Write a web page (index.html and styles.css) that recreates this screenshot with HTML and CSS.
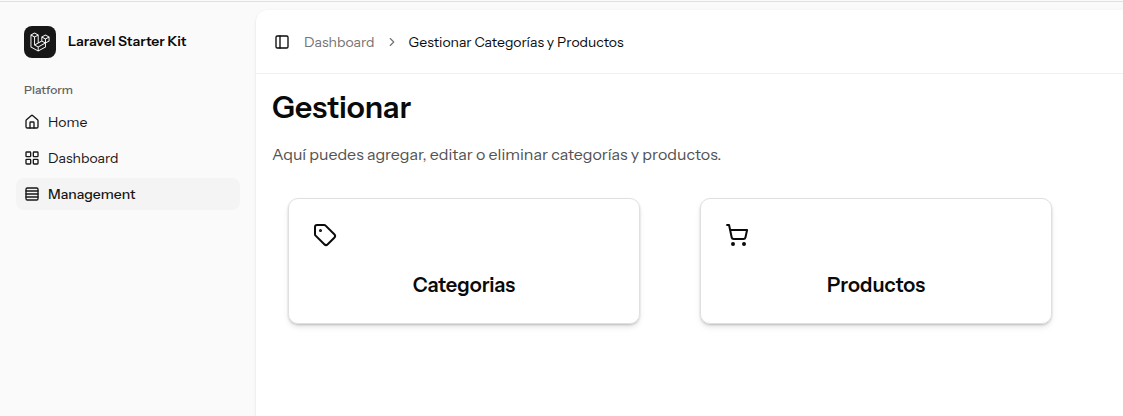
FILE: index.html
```html
<!DOCTYPE html>
<html lang="es">
<head>
<meta charset="utf-8">
<title>Gestionar Categorías y Productos</title>
<link rel="stylesheet" href="styles.css">
</head>
<body>
<div class="app">
  <aside class="sidebar">
    <div class="brand">
      <span class="brand-mark"><svg viewBox="0 0 40 42" width="20" height="20"><path fill="#fff" fill-rule="evenodd" clip-rule="evenodd" d="M17.2 5.633 8.6.855 0 5.633v26.51l16.2 9 16.2-9v-8.442l7.6-4.223V9.856l-8.6-4.777-8.6 4.777V18.3l-5.6 3.111V5.633ZM38 18.301l-5.6 3.11v-6.157l5.6-3.11V18.3Zm-1.06-7.856-5.54 3.078-5.54-3.079 5.54-3.078 5.54 3.079ZM24.8 18.3v-6.157l5.6 3.111v6.158L24.8 18.3Zm-1 1.732 5.54 3.078-13.14 7.302-5.54-3.078 13.14-7.3v-.002Zm-16.2 7.89 7.6 4.222V38.3L2 30.966V7.92l5.6 3.111v16.892ZM8.6 9.3 3.06 6.222 8.6 3.143l5.54 3.08L8.6 9.3Zm21.8 15.51-13.2 7.334V38.3l13.2-7.334v-6.156ZM9.6 11.034l5.6-3.11v14.6l-5.6 3.11v-14.6Z"/></svg></span>
      <span class="brand-name">Laravel Starter Kit</span>
    </div>
    <div class="group-label">Platform</div>
    <nav class="menu">
      <a class="item"><svg class="icon" viewBox="0 0 24 24"><path d="M15 21v-8a1 1 0 0 0-1-1h-4a1 1 0 0 0-1 1v8"/><path d="M3 10a2 2 0 0 1 .709-1.528l7-5.999a2 2 0 0 1 2.582 0l7 5.999A2 2 0 0 1 21 10v9a2 2 0 0 1-2 2H5a2 2 0 0 1-2-2z"/></svg><span>Home</span></a>
      <a class="item"><svg class="icon" viewBox="0 0 24 24"><rect width="7" height="7" x="3" y="3" rx="1"/><rect width="7" height="7" x="14" y="3" rx="1"/><rect width="7" height="7" x="14" y="14" rx="1"/><rect width="7" height="7" x="3" y="14" rx="1"/></svg><span>Dashboard</span></a>
      <a class="item active"><svg class="icon" viewBox="0 0 24 24"><rect width="18" height="18" x="3" y="3" rx="2"/><path d="M21 7.500H3M21 12H3M21 16.500H3"/></svg><span>Management</span></a>
    </nav>
  </aside>
  <main class="panel">
    <header class="topbar">
      <svg class="icon" viewBox="0 0 24 24"><rect width="18" height="18" x="3" y="3" rx="2"/><path d="M9 3v18"/></svg>
      <span class="crumb">Dashboard</span>
      <svg class="chevron" viewBox="0 0 24 24"><path d="m9 18 6-6-6-6"/></svg>
      <span class="crumb-current">Gestionar Categorías y Productos</span>
    </header>
    <section class="content">
      <h1>Gestionar</h1>
      <p>Aquí puedes agregar, editar o eliminar categorías y productos.</p>
      <div class="cards">
        <article class="card">
          <svg class="card-icon" viewBox="0 0 24 24"><path d="M12.586 2.586A2 2 0 0 0 11.172 2H4a2 2 0 0 0-2 2v7.172a2 2 0 0 0 .586 1.414l8.704 8.704a2.426 2.426 0 0 0 3.420 0l6.580-6.580a2.426 2.426 0 0 0 0-3.420z"/><circle cx="7.500" cy="7.500" r=".5" fill="currentColor"/></svg>
          <h2>Categorias</h2>
        </article>
        <article class="card">
          <svg class="card-icon" viewBox="0 0 24 24"><circle cx="8" cy="21" r="1"/><circle cx="19" cy="21" r="1"/><path d="M2.050 2.050h2l2.660 12.420a2 2 0 0 0 2 1.580h9.780a2 2 0 0 0 1.950-1.570l1.650-7.430H5.120"/></svg>
          <h2>Productos</h2>
        </article>
      </div>
    </section>
  </main>
</div>
</body>
</html>
```
FILE: styles.css
```css
* { box-sizing: border-box; }
body {
  margin: 0;
  height: 416px;
  overflow: hidden;
  background: #fafafa;
  color: #0a0a0a;
  font-family: "Instrument Sans", Inter, "Liberation Sans", sans-serif;
  font-size: 14px;
  line-height: 20px;
  white-space: nowrap;
}
.app { display: flex; height: 416px; padding-top: 1px; }
.app::before {
  content: "";
  position: absolute;
  inset: 1px 0 auto;
  height: 1px;
  background: #dfe0e6;
}
svg { display: block; flex: none; }
.icon, .chevron, .card-icon {
  fill: none;
  stroke: currentColor;
  stroke-width: 2;
  stroke-linecap: round;
  stroke-linejoin: round;
}
.icon { width: 16px; height: 16px; }
.sidebar { width: 256px; flex: none; padding: 17px 16px 0; }
.brand { display: flex; align-items: center; gap: 12px; height: 48px; padding: 0 8px; }
.brand-mark {
  display: flex;
  align-items: center;
  justify-content: center;
  width: 32px;
  height: 32px;
  border-radius: 8px;
  background: #171717;
}
.brand-name { padding-bottom: 2px; font-weight: 600; }
.group-label {
  height: 32px;
  margin-top: 8px;
  padding: 0 8px;
  font-size: 12px;
  font-weight: 500;
  line-height: 32px;
  color: #5f5f5f;
}
.menu { display: flex; flex-direction: column; gap: 4px; }
.item {
  display: flex;
  align-items: center;
  gap: 8px;
  height: 32px;
  padding: 0 8px;
  border-radius: 8px;
  color: #171717;
}
.item.active { background: #f4f4f5; font-weight: 500; }
.panel {
  flex: 1;
  min-width: 0;
  margin-top: 9px;
  height: 420px;
  background: #fff;
  border-radius: 12px 0 0;
  box-shadow: 0 1px 3px rgba(0, 0, 0, .1), 0 1px 2px -1px rgba(0, 0, 0, .1);
}
.topbar {
  display: flex;
  align-items: center;
  height: 64px;
  padding-left: 18px;
  border-bottom: 1px solid #f0f0f0;
}
.crumb { margin-left: 14px; color: #737373; }
.chevron { width: 14px; height: 14px; margin: 0 10px; color: #737373; }
.content { padding: 16px; }
h1 { margin: 0; font-size: 30px; line-height: 36px; font-weight: 600; }
p { margin: 16px 0 0; font-size: 16px; line-height: 24px; color: #525252; }
.cards { display: flex; gap: 60px; padding: 32px 16px 0; }
.card {
  width: 352px;
  height: 126px;
  padding: 24px;
  border: 1px solid #e0e0e0;
  border-radius: 10px;
  box-shadow:
    0 4px 6px -1px rgba(0, 0, 0, .1),
    0 2px 4px -2px rgba(0, 0, 0, .1),
    0 1px 2px rgba(0, 0, 0, .14);
}
.card-icon { width: 24px; height: 24px; }
h2 { margin: 24px 0 0; font-size: 20px; line-height: 28px; font-weight: 600; text-align: center; }
```
